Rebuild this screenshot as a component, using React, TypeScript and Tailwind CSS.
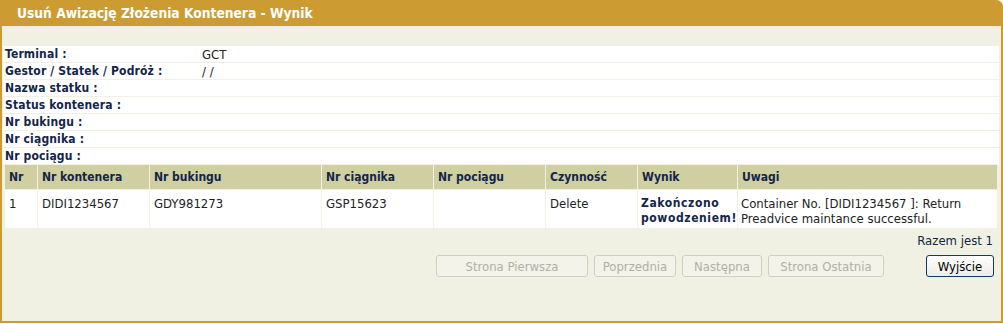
const infoRows: [string, string][] = [
  ['Terminal :', 'GCT'],
  ['Gestor / Statek / Podróż :', '/ /'],
  ['Nazwa statku :', ''],
  ['Status kontenera :', ''],
  ['Nr bukingu :', ''],
  ['Nr ciągnika :', ''],
  ['Nr pociągu :', ''],
];

const columns = ['Nr', 'Nr kontenera', 'Nr bukingu', 'Nr ciągnika', 'Nr pociągu', 'Czynność', 'Wynik', 'Uwagi'];

const gridCols = 'grid grid-cols-[32px_111px_171px_111px_111px_91px_99px_1fr] gap-x-px';

const App = () => {
  return (
    <div className="w-[1003px] h-[323px] bg-[#f1f1e3] border-x-2 border-b-2 border-[#cc9c33] rounded-tr-[7px] font-['DejaVu_Sans_Condensed','DejaVu_Sans',sans-serif] text-[13px] leading-[15px] flex flex-col">
      {/* title bar */}
      <div className="h-[26px] -mx-[2px] bg-[#cc9c33] rounded-tr-[7px] flex items-center pl-[17px]">
        <h1 className="text-white font-bold text-[13.7px]">Usuń Awizację Złożenia Kontenera - Wynik</h1>
      </div>

      <div className="h-[20px]" />

      {/* details */}
      <div className="ml-px mr-[2px] flex flex-col">
        {infoRows.map(([label, value]) => (
          <div key={label} className="h-[17px] bg-white border-b border-[#f1f1e3] flex items-center">
            <span className="w-[199px] pl-[2px] font-bold text-[12px] tracking-[0.15px] text-[#13254a]">{label}</span>
            <span className="text-[#222]">{value}</span>
          </div>
        ))}
      </div>

      {/* results table */}
      <div className="ml-[3px] mr-[4px]">
        <div className={`${gridCols} h-[24px] bg-[#cfcfa1]`}>
          {columns.map(col => (
            <div key={col} className="flex items-center pl-[4px] font-bold text-[12px] text-[#13254a] border-r border-[#f1f1e3] last:border-r-0 -mr-px">
              {col}
            </div>
          ))}
        </div>
        <div className={`${gridCols} mt-px h-[38px] bg-[#f1f1e3] text-[#222]`}>
          <div className="bg-white pl-[4px] pt-[6px]">1</div>
          <div className="bg-white pl-[4px] pt-[6px]">DIDI1234567</div>
          <div className="bg-white pl-[4px] pt-[6px]">GDY981273</div>
          <div className="bg-white pl-[4px] pt-[6px]">GSP15623</div>
          <div className="bg-white pl-[4px] pt-[6px]"></div>
          <div className="bg-white pl-[4px] pt-[6px]">Delete</div>
          <div className="bg-white pl-[3px] pt-[6px] font-bold text-[12px] leading-[15px] text-[#13254a] tracking-[0.6px] whitespace-nowrap">
            Zakończono
            <br />
            powodzeniem!
          </div>
          <div className="bg-white pl-[3px] pt-[6px]">
            Container No. [DIDI1234567 ]: Return Preadvice maintance successful.
          </div>
        </div>
      </div>

      <div className="flex justify-end pr-[8px] pt-[5px] text-[#13254a]">Razem jest 1</div>

      {/* pager */}
      <div className="flex justify-end items-center pr-[7px] pt-[7px]">
        <div className="flex gap-[6px]">
          <button disabled className="w-[152px] h-[22px] rounded-[3px] border border-[#cfcfc0] bg-[#f3f3ea] text-[#b0b0a8]">Strona Pierwsza</button>
          <button disabled className="w-[82px] h-[22px] rounded-[3px] border border-[#cfcfc0] bg-[#f3f3ea] text-[#b0b0a8]">Poprzednia</button>
          <button disabled className="w-[80px] h-[22px] rounded-[3px] border border-[#cfcfc0] bg-[#f3f3ea] text-[#b0b0a8]">Następna</button>
          <button disabled className="w-[116px] h-[22px] rounded-[3px] border border-[#cfcfc0] bg-[#f3f3ea] text-[#b0b0a8]">Strona Ostatnia</button>
        </div>
        <button className="ml-[42px] w-[68px] h-[22px] rounded-[3px] border border-[#1c3567] bg-gradient-to-b from-white to-[#ecebe6] text-black">Wyjście</button>
      </div>
    </div>
  );
};

export default App;
